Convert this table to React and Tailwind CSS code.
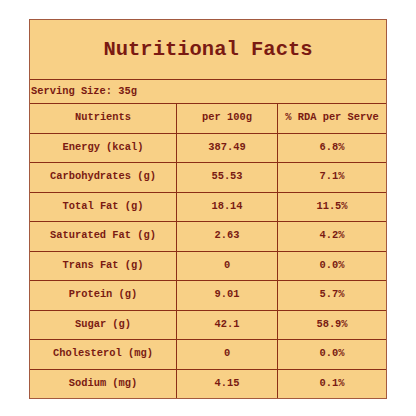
import React from "react";

const rows = [
  ["Energy (kcal)", "387.49", "6.8%"],
  ["Carbohydrates (g)", "55.53", "7.1%"],
  ["Total Fat (g)", "18.14", "11.5%"],
  ["Saturated Fat (g)", "2.63", "4.2%"],
  ["Trans Fat (g)", "0", "0.0%"],
  ["Protein (g)", "9.01", "5.7%"],
  ["Sugar (g)", "42.1", "58.9%"],
  ["Cholesterol (mg)", "0", "0.0%"],
  ["Sodium (mg)", "4.15", "0.1%"],
];

function Row({ cells }) {
  return (
    <div className="grid grid-cols-[146px_101px_1fr] h-[29.5px] border-t border-[#8b2e16]">
      <div className="flex items-center justify-center">{cells[0]}</div>
      <div className="flex items-center justify-center border-l border-[#8b2e16]">{cells[1]}</div>
      <div className="flex items-center justify-center border-l border-[#8b2e16]">{cells[2]}</div>
    </div>
  );
}

export default function App() {
  return (
    <div className="w-[416px] h-[416px] bg-white pt-[19px] pl-[29px]" style={{ fontFamily: '"Liberation Mono", "Courier New", monospace' }}>
      <div className="w-[358px] h-[380px] bg-[#f8d086] border border-[#a35a40] text-[#7a1a12] font-bold text-[10.4px] flex flex-col">
        <div className="h-[59px] flex items-center justify-center text-[20.5px] pt-[1px]">Nutritional Facts</div>
        <div className="h-[24px] flex items-center pl-[1px] border-t border-[#8b2e16]">Serving Size: 35g</div>
        <Row cells={["Nutrients", "per 100g", "% RDA per Serve"]} />
        {rows.map((r) => (
          <Row key={r[0]} cells={r} />
        ))}
      </div>
    </div>
  );
}
